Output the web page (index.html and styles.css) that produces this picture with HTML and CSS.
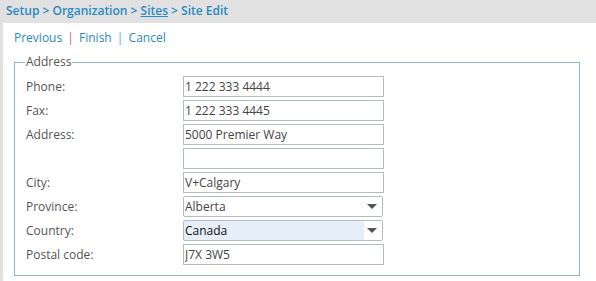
FILE: index.html
```html
<!DOCTYPE html>
<html lang="en">
<head>
    <meta charset="UTF-8">
    <title>Site Edit</title>
    <link rel="stylesheet" href="styles.css">
</head>
<body>
    <div class="breadcrumb">
        <a href="#">Setup</a> &gt; <a href="#">Organization</a> &gt; <a href="#" class="current">Sites</a> &gt; Site Edit
    </div>

    <div class="page">
        <div class="actions">
            <a href="#">Previous</a>
            <span class="sep visited">|</span>
            <a href="#">Finish</a>
            <span class="sep">|</span>
            <a href="#">Cancel</a>
        </div>

        <fieldset class="address">
            <legend>Address</legend>
            <div class="form-grid">
                <label>Phone:</label>
                <input type="text" value="1 222 333 4444">

                <label>Fax:</label>
                <input type="text" value="1 222 333 4445">

                <label>Address:</label>
                <input type="text" value="5000 Premier Way">

                <label></label>
                <input type="text" value="">

                <label>City:</label>
                <input type="text" value="V+Calgary">

                <label>Province:</label>
                <div class="select-wrap">
                    <select>
                        <option>Alberta</option>
                    </select>
                </div>

                <label>Country:</label>
                <div class="select-wrap">
                    <select class="selected">
                        <option>Canada</option>
                    </select>
                </div>

                <label>Postal code:</label>
                <input type="text" value="J7X 3W5">
            </div>
        </fieldset>
    </div>
</body>
</html>
```

FILE: styles.css
```css
body {
    margin: 0;
    background: #e1e1e1;
    font-family: 'Open Sans', 'Liberation Sans', sans-serif;
    font-size: 12px;
    color: #555;
    height: 281px;
    overflow: hidden;
}

a {
    color: #2a8ac0;
    text-decoration: none;
}

.breadcrumb {
    height: 23px;
    line-height: 22px;
    padding-left: 6px;
    color: #2a8ac0;
    font-weight: 600;
    font-size: 12px;
}

.breadcrumb a.current {
    text-decoration: underline;
}

.page {
    margin-left: 3px;
    background: white;
    height: 258px;
    padding-top: 5px;
    box-sizing: border-box;
}

.actions {
    padding-left: 11px;
    height: 20px;
    line-height: 20px;
}

.actions .sep {
    color: #6aa6c8;
    margin: 0 2px;
}

.actions .sep.visited {
    color: #b86a8c;
}

.address {
    margin: 7px 0 0 11px;
    width: 566px;
    box-sizing: border-box;
    border: 1px solid #8cb6cc;
    padding: 0 11px 10px 11px;
}

.address legend {
    padding: 0 1px;
    margin-left: -1px;
    color: #555;
    line-height: 14px;
}

.form-grid {
    display: grid;
    grid-template-columns: 157px 201px;
    row-gap: 3px;
    align-items: center;
    margin-top: 7px;
}

.form-grid label {
    color: #555;
}

.form-grid input,
.form-grid select {
    height: 21px;
    width: 201px;
    box-sizing: border-box;
    border: 1px solid #b4bcc0;
    font-family: inherit;
    font-size: 12px;
    color: #444;
    padding: 0 1px;
    margin: 0;
    outline: none;
}

.select-wrap {
    position: relative;
    width: 200px;
}

.form-grid select {
    width: 200px;
    appearance: none;
    -webkit-appearance: none;
    background: white;
    border-radius: 2px;
    padding: 0 1px;
}

.form-grid select.selected {
    background: linear-gradient(to right, #e6eef9 180px, white 180px);
    color: #111;
}

.select-wrap::after {
    content: "";
    position: absolute;
    right: 6px;
    top: 8px;
    border-left: 5px solid transparent;
    border-right: 5px solid transparent;
    border-top: 5px solid #555;
    pointer-events: none;
}
```
